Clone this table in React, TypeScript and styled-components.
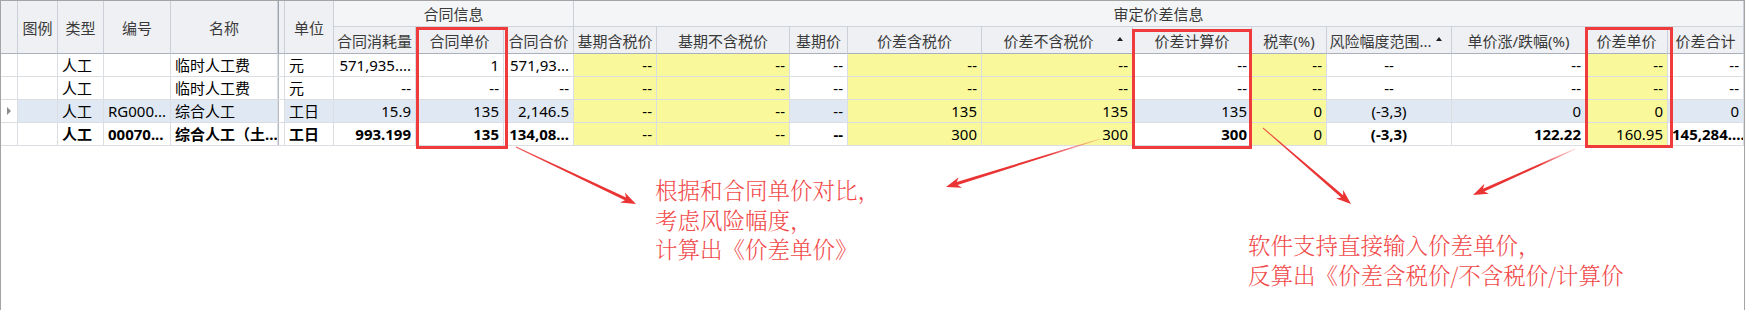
import React from 'react';
import styled, { createGlobalStyle } from 'styled-components';

const GlobalStyle = createGlobalStyle`
  html, body {
    margin: 0;
    padding: 0;
    background: #fff;
  }
  body {
    font-family: "Noto Sans", "Noto Sans CJK SC", sans-serif;
  }
`;

// column widths, left to right (the 7px one is the frozen-column splitter)
const COLS = [17, 40, 46, 67, 107, 7, 49, 82, 88, 70, 83, 133, 58, 134, 151, 119, 75, 125, 134, 82, 76];

type Align = 'left' | 'right' | 'center';
type Tint = 'yellow' | 'selected' | undefined;

interface ValueCol {
  align: Align;
  editable?: boolean;
}

const VALUE_COLS: ValueCol[] = [
  { align: 'right' }, // 合同消耗量
  { align: 'right' }, // 合同单价
  { align: 'right' }, // 合同合价
  { align: 'right', editable: true }, // 基期含税价
  { align: 'right', editable: true }, // 基期不含税价
  { align: 'right' }, // 基期价
  { align: 'right', editable: true }, // 价差含税价
  { align: 'right', editable: true }, // 价差不含税价
  { align: 'right' }, // 价差计算价
  { align: 'right', editable: true }, // 税率
  { align: 'center' }, // 风险幅度范围
  { align: 'right' }, // 单价涨/跌幅
  { align: 'right', editable: true }, // 价差单价
  { align: 'right' }, // 价差合计
];

interface RowData {
  kind: string;
  code: string;
  name: string;
  unit: string;
  values: string[];
  selected?: boolean;
  bold?: boolean;
}

const ROWS: RowData[] = [
  {
    kind: '人工',
    code: '',
    name: '临时人工费',
    unit: '元',
    values: ['571,935....', '1', '571,93...', '--', '--', '--', '--', '--', '--', '--', '--', '--', '--', '--'],
  },
  {
    kind: '人工',
    code: '',
    name: '临时人工费',
    unit: '元',
    values: ['--', '--', '--', '--', '--', '--', '--', '--', '--', '--', '--', '--', '--', '--'],
  },
  {
    kind: '人工',
    code: 'RG000...',
    name: '综合人工',
    unit: '工日',
    values: ['15.9', '135', '2,146.5', '--', '--', '--', '135', '135', '135', '0', '(-3,3)', '0', '0', '0'],
    selected: true,
  },
  {
    kind: '人工',
    code: '00070...',
    name: '综合人工（土...',
    unit: '工日',
    values: ['993.199', '135', '134,08...', '--', '--', '--', '300', '300', '300', '0', '(-3,3)', '122.22', '160.95', '145,284....'],
    bold: true,
  },
];

const Page = styled.div`
  position: relative;
  width: 1746px;
  height: 310px;
  overflow: hidden;
`;

const Frame = styled.div`
  box-sizing: border-box;
  width: 1745px;
  height: 310px;
  border: 1px solid #a4a4a4;
  border-bottom: none;
  background: #fff;
`;

const Grid = styled.div`
  display: grid;
  grid-template-columns: ${COLS.map((w) => w + 'px').join(' ')};
  grid-template-rows: 26px 27px repeat(4, 23px);
  font-size: 15px;
`;

const HeadCell = styled.div<{ $rows?: number; $cols?: number; $group?: boolean }>`
  box-sizing: border-box;
  min-width: 0;
  grid-row: span ${(p) => p.$rows ?? 1};
  grid-column: span ${(p) => p.$cols ?? 1};
  display: flex;
  align-items: center;
  justify-content: center;
  padding: 0 2px;
  background: ${(p) => (p.$group ? '#f4f5f7' : '#eef0f3')};
  border-right: 1px solid #cbd0d8;
  border-bottom: 1px solid ${(p) => (p.$group ? '#cfd3da' : '#aab1bd')};
  color: #3a3a3a;
  white-space: nowrap;
  overflow: hidden;
`;

const HeadText = styled.span`
  flex: 1;
  min-width: 0;
  text-align: center;
  overflow: hidden;
`;

const SortMark = styled.span`
  flex: none;
  width: 0;
  height: 0;
  margin: 0 7px 2px 4px;
  border-left: 3.5px solid transparent;
  border-right: 3.5px solid transparent;
  border-bottom: 4px solid #1e1e1e;
`;

const SplitHead = styled.div`
  box-sizing: border-box;
  grid-row: span 2;
  background: linear-gradient(to right, #9ea4ad 0, #9ea4ad 1px, #eef0f3 1px) #eef0f3;
  border-right: 1px solid #cbd0d8;
  border-bottom: 1px solid #aab1bd;
`;

const Cell = styled.div<{ $align?: Align; $tint?: Tint; $bold?: boolean }>`
  box-sizing: border-box;
  min-width: 0;
  padding: 0 4px;
  line-height: 22px;
  text-align: ${(p) => p.$align ?? 'left'};
  background: ${(p) =>
    p.$tint === 'yellow' ? '#f9f99b' : p.$tint === 'selected' ? '#dfe8f3' : '#fff'};
  border-right: 1px solid #dadde2;
  border-bottom: 1px solid #dadde2;
  color: #000;
  font-weight: ${(p) => (p.$bold ? 700 : 400)};
  white-space: nowrap;
  overflow: hidden;
`;

const SplitCell = styled.div`
  box-sizing: border-box;
  background: linear-gradient(to right, #b5b9c0 0, #b5b9c0 1px, #fff 1px) #fff;
  border-right: 1px solid #dadde2;
  border-bottom: 1px solid #dadde2;
`;

const Indicator = styled.div`
  box-sizing: border-box;
  display: flex;
  align-items: center;
  padding-left: 6px;
  background: #fff;
  border-right: 1px solid #dadde2;
  border-bottom: 1px solid #dadde2;
`;

const CurrentMark = styled.span`
  width: 0;
  height: 0;
  border-top: 4px solid transparent;
  border-bottom: 4px solid transparent;
  border-left: 4px solid #8c8c8c;
`;

const Note = styled.p<{ $left: number; $top: number }>`
  position: absolute;
  left: ${(p) => p.$left}px;
  top: ${(p) => p.$top}px;
  margin: 0;
  font-family: "Noto Serif CJK SC", "Noto Sans CJK SC", serif;
  font-weight: 300;
  font-size: 22.5px;
  line-height: 29.5px;
  color: #f24a4a;
  white-space: nowrap;
`;

const Overlay = styled.svg`
  position: absolute;
  left: 0;
  top: 0;
  pointer-events: none;
`;

function arrowPoints(sx: number, sy: number, tx: number, ty: number): string {
  const dx = tx - sx;
  const dy = ty - sy;
  const len = Math.hypot(dx, dy);
  const ux = dx / len;
  const uy = dy / len;
  const nx = -uy;
  const ny = ux;
  const headL = 15;
  const headW = 5.5;
  const neckW = 1.5;
  const tailW = 0.5;
  const neckX = tx - ux * headL * 0.78;
  const neckY = ty - uy * headL * 0.78;
  const baseX = tx - ux * headL;
  const baseY = ty - uy * headL;
  const pts: [number, number][] = [
    [sx + nx * tailW, sy + ny * tailW],
    [neckX + nx * neckW, neckY + ny * neckW],
    [baseX + nx * headW, baseY + ny * headW],
    [tx, ty],
    [baseX - nx * headW, baseY - ny * headW],
    [neckX - nx * neckW, neckY - ny * neckW],
    [sx - nx * tailW, sy - ny * tailW],
  ];
  return pts.map(([x, y]) => x.toFixed(1) + ',' + y.toFixed(1)).join(' ');
}

const ARROWS = [
  { id: 'a1', sx: 516, sy: 147, tx: 636, ty: 204, fade: false },
  { id: 'a2', sx: 1100, sy: 139, tx: 946, ty: 187, fade: true },
  { id: 'a3', sx: 1263, sy: 128, tx: 1351, ty: 204, fade: false },
  { id: 'a4', sx: 1575, sy: 149, tx: 1473, ty: 195, fade: true },
];

const BOXES = [
  { x: 417.5, y: 28.5, w: 89, h: 119 },
  { x: 1133.5, y: 30.5, w: 117, h: 117 },
  { x: 1586.5, y: 28.5, w: 85, h: 118 },
];

function Annotations() {
  return (
    <Overlay width={1746} height={310} viewBox="0 0 1746 310">
      <defs>
        {ARROWS.map((a) => (
          <linearGradient
            key={a.id}
            id={a.id}
            gradientUnits="userSpaceOnUse"
            x1={a.sx}
            y1={a.sy}
            x2={a.tx}
            y2={a.ty}
          >
            <stop offset="0" stopColor="#ea3434" stopOpacity={a.fade ? 0.15 : 0.8} />
            <stop offset="0.35" stopColor="#ea3434" stopOpacity={1} />
            <stop offset="1" stopColor="#ea3434" stopOpacity={1} />
          </linearGradient>
        ))}
      </defs>
      {BOXES.map((b, i) => (
        <rect key={i} x={b.x} y={b.y} width={b.w} height={b.h} fill="none" stroke="#ef3b3b" strokeWidth={3} />
      ))}
      {ARROWS.map((a) => (
        <polygon key={a.id} points={arrowPoints(a.sx, a.sy, a.tx, a.ty)} fill={`url(#${a.id})`} />
      ))}
    </Overlay>
  );
}

function Header() {
  return (
    <>
      <HeadCell $rows={2} />
      <HeadCell $rows={2}>图例</HeadCell>
      <HeadCell $rows={2}>类型</HeadCell>
      <HeadCell $rows={2}>编号</HeadCell>
      <HeadCell $rows={2}>名称</HeadCell>
      <SplitHead />
      <HeadCell $rows={2}>单位</HeadCell>
      <HeadCell $group $cols={3}>合同信息</HeadCell>
      <HeadCell $group $cols={11}>审定价差信息</HeadCell>

      <HeadCell>合同消耗量</HeadCell>
      <HeadCell>合同单价</HeadCell>
      <HeadCell>合同合价</HeadCell>
      <HeadCell>基期含税价</HeadCell>
      <HeadCell>基期不含税价</HeadCell>
      <HeadCell>基期价</HeadCell>
      <HeadCell>价差含税价</HeadCell>
      <HeadCell>
        <HeadText>价差不含税价</HeadText>
        <SortMark />
      </HeadCell>
      <HeadCell>价差计算价</HeadCell>
      <HeadCell>税率(%)</HeadCell>
      <HeadCell>
        <HeadText>风险幅度范围...</HeadText>
        <SortMark />
      </HeadCell>
      <HeadCell>单价涨/跌幅(%)</HeadCell>
      <HeadCell>价差单价</HeadCell>
      <HeadCell>价差合计</HeadCell>
    </>
  );
}

function Row({ row }: { row: RowData }) {
  const base: Tint = row.selected ? 'selected' : undefined;
  return (
    <>
      <Indicator>{row.selected && <CurrentMark />}</Indicator>
      <Cell $tint={base} />
      <Cell $tint={base} $bold={row.bold}>{row.kind}</Cell>
      <Cell $tint={base} $bold={row.bold}>{row.code}</Cell>
      <Cell $tint={base} $bold={row.bold}>{row.name}</Cell>
      <SplitCell />
      <Cell $tint={base} $bold={row.bold}>{row.unit}</Cell>
      {row.values.map((v, i) => {
        const col = VALUE_COLS[i];
        return (
          <Cell
            key={i}
            $align={col.align}
            $tint={col.editable ? 'yellow' : base}
            $bold={row.bold && !col.editable}
          >
            {v}
          </Cell>
        );
      })}
    </>
  );
}

export default function App() {
  return (
    <>
      <GlobalStyle />
      <Page>
        <Frame>
          <Grid>
            <Header />
            {ROWS.map((r, i) => (
              <Row key={i} row={r} />
            ))}
          </Grid>
        </Frame>
        <Annotations />
        <Note $left={655} $top={175}>
          根据和合同单价对比，
          <br />
          考虑风险幅度，
          <br />
          计算出《价差单价》
        </Note>
        <Note $left={1248} $top={230}>
          软件支持直接输入价差单价，
          <br />
          反算出《价差含税价/不含税价/计算价
        </Note>
      </Page>
    </>
  );
}
